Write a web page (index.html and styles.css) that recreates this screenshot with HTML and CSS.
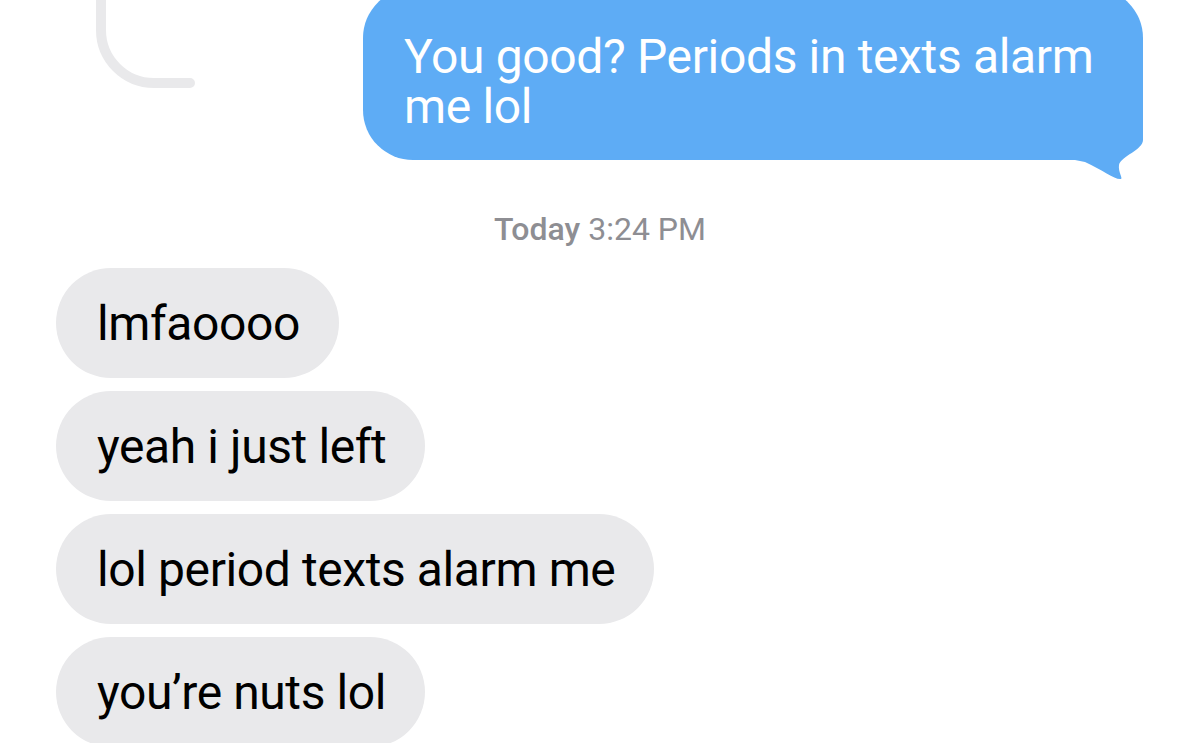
FILE: index.html
```html
<!DOCTYPE html>
<html>
<head>
<meta charset="utf-8">
<link rel="stylesheet" href="styles.css">
</head>
<body>
<div class="thread">
  <div class="top-row">
    <svg class="attach-edge" width="200" height="95" viewBox="0 0 200 95">
      <path d="M101 -10 V30 A53 53 0 0 0 154 83 H190" fill="none" stroke="#e9e9eb" stroke-width="10" stroke-linecap="round"/>
    </svg>
    <div class="sent">
      <p class="sent-text">You good? Periods in texts alarm me lol</p>
      <svg class="tail" width="75" height="85" viewBox="0 0 75 85">
        <path d="M68 0 L68 40 C68 50 46 56 44 65 C43 72 48 78 46 79 C40 80 28 70 10 62 L0 60 L0 0 Z" fill="#5eacf5"/>
      </svg>
    </div>
  </div>
  <div class="stamp"><span class="day">Today</span> 3:24 PM</div>
  <div class="received">
    <div class="bubble">lmfaoooo</div>
    <div class="bubble">yeah i just left</div>
    <div class="bubble">lol period texts alarm me</div>
    <div class="bubble">you’re nuts lol</div>
  </div>
</div>
</body>
</html>
```
FILE: styles.css
```css
html, body {
  margin: 0;
  padding: 0;
  background: #ffffff;
  height: 743px;
  overflow: hidden;
}
.thread {
  display: flex;
  flex-direction: column;
  font-family: Roboto, "Liberation Sans", sans-serif;
}
.top-row {
  display: flex;
  justify-content: space-between;
  align-items: flex-start;
  height: 160px;
}
.attach-edge {
  display: block;
}
.sent {
  position: relative;
  width: 780px;
  height: 172px;
  margin-top: -12px;
  margin-right: 57px;
  box-sizing: border-box;
  padding: 44px 30px 0 41px;
  background: #5eacf5;
  border-radius: 50px;
}
.sent-text {
  margin: 0;
  color: #ffffff;
  font-size: 48px;
  line-height: 50px;
  letter-spacing: -0.35px;
  position: relative;
  z-index: 1;
}
.tail {
  position: absolute;
  left: 712px;
  top: 112px;
}
.stamp {
  margin-top: 52px;
  text-align: center;
  color: #8e8e93;
  font-size: 32px;
  line-height: 34px;
}
.day {
  font-weight: 500;
}
.received {
  margin-top: 22px;
  display: flex;
  flex-direction: column;
  align-items: flex-start;
  gap: 13px;
  padding-left: 56px;
}
.bubble {
  height: 110px;
  box-sizing: border-box;
  padding: 2px 39px 0 41px;
  border-radius: 55px;
  background: #e9e9eb;
  color: #000000;
  font-size: 48px;
  line-height: 108px;
  letter-spacing: -0.4px;
  white-space: nowrap;
}
```
